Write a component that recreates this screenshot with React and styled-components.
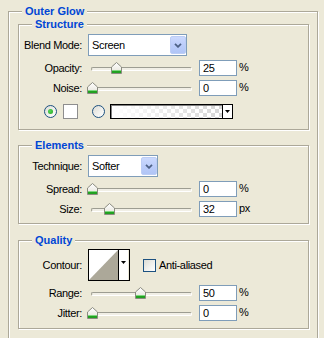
import React from "react";
import styled, { createGlobalStyle } from "styled-components";

const Global = createGlobalStyle`
  html, body { margin: 0; padding: 0; background: #ece9d8; overflow: hidden; }
  body { font-family: "Liberation Sans", Tahoma, Arial, sans-serif; font-size: 11px; color: #000; letter-spacing: -0.35px; }
`;

const Page = styled.div`
  box-sizing: border-box;
  height: 338px;
  overflow: hidden;
  padding: 11px 0 0 8px;
`;

const Group = styled.div`
  box-sizing: border-box;
  width: ${(p) => (p.$width ? `${p.$width}px` : "auto")};
  border: 1px solid #aca899;
  box-shadow: inset 1px 1px 0 #fff, 1px 1px 0 #fff;
  margin-top: ${(p) => p.$mt || 0}px;
`;

const Legend = styled.div`
  width: fit-content;
  height: 13px;
  margin: -7px 0 0 13px;
  padding: 0 3px;
  background: #ece9d8;
  color: #0046d5;
  font-weight: bold;
  letter-spacing: 0;
  line-height: 13px;
  white-space: nowrap;
`;

const OuterBody = styled.div`
  display: flex;
  flex-direction: column;
  padding: 6px 8px 30px 9px;
`;

const Rows = styled.div`
  display: flex;
  flex-direction: column;
  gap: 4px;
  padding: ${(p) => p.$pt}px 0 ${(p) => p.$pb}px 0;
`;

const Row = styled.div`
  display: flex;
  align-items: center;
`;

const Label = styled.div`
  flex-shrink: 0;
  width: 63px;
  margin-right: 6px;
  text-align: right;
  white-space: nowrap;
  line-height: 13px;
`;

const SelectBox = styled.div`
  box-sizing: border-box;
  display: flex;
  width: ${(p) => p.$width}px;
  height: 22px;
  padding: 1px 0 1px 1px;
  border: 1px solid #7f9db9;
  background: #fff;
`;

const SelectText = styled.div`
  flex: 1;
  display: flex;
  align-items: center;
  padding-left: 2px;
`;

const DropButton = styled.div`
  box-sizing: border-box;
  width: 16px;
  display: flex;
  align-items: center;
  justify-content: center;
  border: 1px solid #bccdf5;
  border-radius: 2px;
  background: linear-gradient(to bottom, #cbd9fd 0%, #bccdfa 50%, #b0c5f6 100%);
`;

const Slider = styled.div`
  position: relative;
  display: flex;
  align-items: center;
  width: 107px;
  height: 16px;
  margin-right: 4px;
  flex-shrink: 0;
`;

const Track = styled.div`
  box-sizing: border-box;
  flex: 1;
  height: 4px;
  margin: 1px 3px 0 3px;
  border: 1px solid;
  border-color: #9d9d92 #fff #fff #9d9d92;
  border-radius: 2px;
  background: #f1efe6;
`;

const ThumbWrap = styled.div`
  position: absolute;
  top: 2px;
  width: 11px;
  height: 12px;
  line-height: 0;
`;

const NumInput = styled.input`
  box-sizing: border-box;
  width: 38px;
  height: 16px;
  margin: 0;
  padding: 0 3px;
  border: 1px solid #7f9db9;
  background: #fff;
  font-family: inherit;
  font-size: 11px;
  letter-spacing: inherit;
  color: #000;
  outline: none;
`;

const Unit = styled.span`
  margin: 0 0 2px 2px;
  line-height: 13px;
`;

const ColorRow = styled.div`
  display: flex;
  align-items: center;
  padding-left: 25px;
  margin-top: 4px;
`;

const Radio = styled.div`
  box-sizing: border-box;
  width: 13px;
  height: 13px;
  margin-left: ${(p) => p.$ml || 0}px;
  border: 1px solid #1c5180;
  border-radius: 50%;
  background: linear-gradient(135deg, #dcdcd5 0%, #f2f2ef 60%, #fff 100%);
  display: flex;
  align-items: center;
  justify-content: center;
  &::after {
    content: "";
    display: ${(p) => (p.$checked ? "block" : "none")};
    width: 5px;
    height: 5px;
    border-radius: 50%;
    background: radial-gradient(circle at 40% 40%, #55d955, #21a121);
  }
`;

const Swatch = styled.div`
  box-sizing: border-box;
  width: 15px;
  height: 15px;
  margin-left: 6px;
  border: 1px solid #8e8e8e;
  background: #fff;
`;

const GradientBox = styled.div`
  box-sizing: border-box;
  display: flex;
  width: 123px;
  height: 15px;
  margin-left: 5px;
  border: 1px solid #000;
`;

const GradientFill = styled.div`
  flex: 1;
  background: linear-gradient(to right, #fff 0%, rgba(255, 255, 255, 0) 100%),
    repeating-conic-gradient(#d6d6d6 0 25%, #fff 0 50%) 0 0 / 8px 8px;
  box-shadow: inset 1px 1px 0 #808080;
`;

const ArrowPart = styled.div`
  box-sizing: border-box;
  width: 10px;
  display: flex;
  justify-content: center;
  align-items: ${(p) => (p.$top ? "flex-start" : "center")};
  padding-top: ${(p) => (p.$top ? "11px" : "0")};
  border-left: 1px solid #000;
  background: #fff;
  line-height: 0;
`;

const ContourBox = styled.div`
  box-sizing: border-box;
  display: flex;
  width: 42px;
  height: 32px;
  border: 1px solid #000;
  line-height: 0;
`;

const Checkbox = styled.div`
  box-sizing: border-box;
  width: 13px;
  height: 13px;
  margin-left: 13px;
  border: 1px solid #1c5180;
  background: linear-gradient(135deg, #dcdcd5 0%, #f2f2ef 60%, #fff 100%);
`;

const CheckLabel = styled.span`
  margin-left: 3px;
  line-height: 13px;
`;

function Chevron() {
  return (
    <svg width="8" height="5" viewBox="0 0 8 5">
      <path d="M1 0.8 L4 3.8 L7 0.8" fill="none" stroke="#4d6185" strokeWidth="1.8" />
    </svg>
  );
}

function DownTri() {
  return (
    <svg width="5" height="3" viewBox="0 0 5 3">
      <path d="M0 0 H5 L2.5 3 Z" fill="#000" />
    </svg>
  );
}

function Thumb() {
  return (
    <svg width="11" height="12" viewBox="0 0 11 12">
      <defs>
        <linearGradient id="tg" x1="0" y1="0" x2="0" y2="1">
          <stop offset="0" stopColor="#ffffff" />
          <stop offset="1" stopColor="#e4e2d8" />
        </linearGradient>
      </defs>
      <path d="M0.5 5 L5.5 0.5 L10.5 5 V11.5 H0.5 Z" fill="url(#tg)" stroke="#8b8b80" />
      <rect x="1" y="9" width="9" height="2" fill="#21a121" />
      <rect x="1" y="8" width="9" height="1" fill="#7ed77e" />
    </svg>
  );
}

function Select({ width, value }) {
  return (
    <SelectBox $width={width}>
      <SelectText>{value}</SelectText>
      <DropButton>
        <Chevron />
      </DropButton>
    </SelectBox>
  );
}

function SliderRow({ label, value, pos, unit }) {
  return (
    <Row>
      <Label>{label}</Label>
      <Slider>
        <Track />
        <ThumbWrap style={{ left: Math.round((96 * pos) / 100) - 1 }}>
          <Thumb />
        </ThumbWrap>
      </Slider>
      <NumInput readOnly value={value} />
      <Unit>{unit}</Unit>
    </Row>
  );
}

function Contour() {
  return (
    <ContourBox>
      <svg width="29" height="30" viewBox="0 0 29 30">
        <rect width="29" height="30" fill="#fff" />
        <path d="M0 30 L29 0 V30 Z" fill="#aca899" />
      </svg>
      <ArrowPart $top>
        <DownTri />
      </ArrowPart>
    </ContourBox>
  );
}

export default function App() {
  return (
    <>
      <Global />
      <Page>
        <Group $width={310}>
          <Legend>Outer Glow</Legend>
          <OuterBody>
            <Group>
              <Legend>Structure</Legend>
              <Rows $pt={3} $pb={10}>
                <Row>
                  <Label>Blend Mode:</Label>
                  <Select width={99} value="Screen" />
                </Row>
                <SliderRow label="Opacity:" value="25" pos={25} unit="%" />
                <SliderRow label="Noise:" value="0" pos={0} unit="%" />
                <ColorRow>
                  <Radio $checked />
                  <Swatch />
                  <Radio $ml={14} />
                  <GradientBox>
                    <GradientFill />
                    <ArrowPart>
                      <DownTri />
                    </ArrowPart>
                  </GradientBox>
                </ColorRow>
              </Rows>
            </Group>

            <Group $mt={15}>
              <Legend>Elements</Legend>
              <Rows $pt={3} $pb={6}>
                <Row>
                  <Label>Technique:</Label>
                  <Select width={70} value="Softer" />
                </Row>
                <SliderRow label="Spread:" value="0" pos={0} unit="%" />
                <SliderRow label="Size:" value="32" pos={17.7} unit="px" />
              </Rows>
            </Group>

            <Group $mt={16}>
              <Legend>Quality</Legend>
              <Rows $pt={2} $pb={7}>
                <Row>
                  <Label>Contour:</Label>
                  <Contour />
                  <Checkbox />
                  <CheckLabel>Anti-aliased</CheckLabel>
                </Row>
                <SliderRow label="Range:" value="50" pos={50} unit="%" />
                <SliderRow label="Jitter:" value="0" pos={0} unit="%" />
              </Rows>
            </Group>
          </OuterBody>
        </Group>
      </Page>
    </>
  );
}
